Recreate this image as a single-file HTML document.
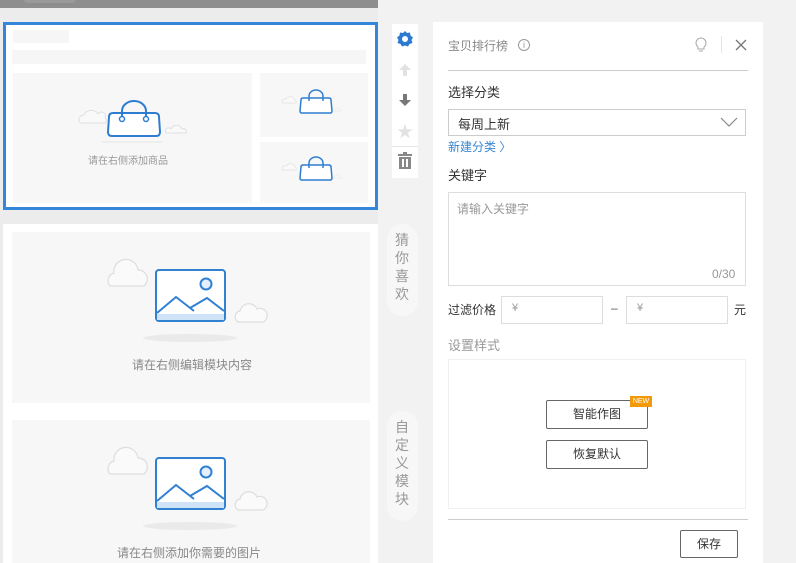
<!DOCTYPE html>
<html><head><meta charset="utf-8"><style>
*{margin:0;padding:0;box-sizing:border-box}
body{width:796px;height:563px;overflow:hidden;background:#f2f2f2;font-family:"Liberation Sans","Noto Sans CJK SC",sans-serif;position:relative;color:#333}
.a{position:absolute}
.t{font-size:12px;color:#888;white-space:nowrap}
</style></head><body>
<div class="a" style="left:0;top:0;width:378px;height:563px;background:#ececec"></div>
<div class="a" style="left:0;top:0;width:378px;height:8px;background:#8e8e8e"></div>
<div class="a" style="left:24px;top:0;width:52px;height:3px;background:#9a9a9a;border-radius:0 0 6px 6px"></div>
<div class="a" style="left:3px;top:22px;width:375px;height:188px;border:3px solid #3486d8;background:#fff"></div>
<div class="a" style="left:13px;top:30px;width:56px;height:13px;background:#f6f6f6"></div>
<div class="a" style="left:12px;top:50px;width:354px;height:14px;background:#f6f6f6"></div>
<div class="a" style="left:13px;top:73px;width:239px;height:130px;background:#f7f7f7"></div>
<div class="a" style="left:260px;top:73px;width:108px;height:64px;background:#f7f7f7"></div>
<div class="a" style="left:260px;top:142px;width:108px;height:61px;background:#f7f7f7"></div>
<svg class="a" style="left:70px;top:95px" width="130" height="50" viewBox="0 0 130 50">
<path d="M9 26 a5 5 0 0 1 5-6 a8 8 0 0 1 14-1 a4 4 0 0 1 7 4 a3 3 0 0 1 0 5 h-24 a3 3 0 0 1-2-2z" fill="#f9f9f9" stroke="#e0e0e0"/>
<path d="M96 38 a3 3 0 0 1 5-4 a6 6 0 0 1 11 0 a3 3 0 0 1 4 4z" fill="#f9f9f9" stroke="#e0e0e0"/>
<path d="M39 22 q0-4 4-4 h42 q4 0 4 4 l1 15 q0 4-4 4 h-44 q-4 0-4-4z" fill="#fff" stroke="#2f7dd0" stroke-width="2"/>
<path d="M52 24 v-8 a12 10 0 0 1 24 0 v8" fill="none" stroke="#2f7dd0" stroke-width="2"/>
<circle cx="52" cy="24" r="2.5" fill="#fff" stroke="#2f7dd0" stroke-width="1.5"/><circle cx="76" cy="24" r="2.5" fill="#fff" stroke="#2f7dd0" stroke-width="1.5"/>
<path d="M32 47 h60" stroke="#eee" stroke-width="2"/>
</svg>
<div class="t a" style="left:88px;top:152px;font-size:10px;color:#999">请在右侧添加商品</div>
<svg class="a" style="left:278px;top:88px" width="70" height="30" viewBox="0 0 70 30">
<path d="M4 14 a3 3 0 0 1 4-3 a5 5 0 0 1 9 1 a2 2 0 0 1 1 3 h-13z" fill="#f9f9f9" stroke="#e6e6e6"/>
<path d="M23 12 q0-2 2-2 h26 q2 0 2 2 l1 11 q0 2-2 2 h-28 q-2 0-2-2z" fill="#fff" stroke="#2f7dd0" stroke-width="1.5"/>
<path d="M31 13 v-5 a7 6 0 0 1 14 0 v5" fill="none" stroke="#2f7dd0" stroke-width="1.5"/>
<path d="M56 23 a3 3 0 0 1 6 0 h2 z" fill="#f9f9f9" stroke="#eee"/></svg>
<svg class="a" style="left:278px;top:155px" width="70" height="30" viewBox="0 0 70 30">
<path d="M4 14 a3 3 0 0 1 4-3 a5 5 0 0 1 9 1 a2 2 0 0 1 1 3 h-13z" fill="#f9f9f9" stroke="#e6e6e6"/>
<path d="M23 12 q0-2 2-2 h26 q2 0 2 2 l1 11 q0 2-2 2 h-28 q-2 0-2-2z" fill="#fff" stroke="#2f7dd0" stroke-width="1.5"/>
<path d="M31 13 v-5 a7 6 0 0 1 14 0 v5" fill="none" stroke="#2f7dd0" stroke-width="1.5"/>
<path d="M56 23 a3 3 0 0 1 6 0 h2 z" fill="#f9f9f9" stroke="#eee"/></svg>
<div class="a" style="left:3px;top:224px;width:375px;height:339px;background:#fff"></div>
<div class="a" style="left:12px;top:232px;width:358px;height:171px;background:#f7f7f7"></div>
<div class="a" style="left:12px;top:420px;width:358px;height:143px;background:#f7f7f7"></div>
<svg class="a" style="left:100px;top:252px" width="180" height="95" viewBox="100 252 180 95">
<path d="M110 286 a8 8 0 0 1 4-13 a12 12 0 0 1 24-3 a9 9 0 0 1 6 16z" fill="#fafafa" stroke="#ddd" stroke-width="1.2"/>
<path d="M238 322 a6 6 0 0 1 2-11 a9 9 0 0 1 17-2 a7 7 0 0 1 6 13z" fill="#fafafa" stroke="#ddd" stroke-width="1.2"/>
<ellipse cx="190" cy="338" rx="47" ry="4" fill="#eaeaea"/>
<rect x="156" y="270" width="69" height="51" rx="3" fill="#fff" stroke="#3280d2" stroke-width="2"/>
<rect x="157" y="314" width="67" height="6" fill="#cfe3f8"/>
<circle cx="206" cy="284" r="5.5" fill="#e3effb" stroke="#3280d2" stroke-width="2"/>
<path d="M157 313 L176 297 L194 311 M190 308 L207 298 L224 311" fill="none" stroke="#3280d2" stroke-width="2"/>
</svg>
<div class="t a" style="left:132px;top:356px">请在右侧编辑模块内容</div>
<svg class="a" style="left:100px;top:440px" width="180" height="95" viewBox="100 252 180 95">
<path d="M110 286 a8 8 0 0 1 4-13 a12 12 0 0 1 24-3 a9 9 0 0 1 6 16z" fill="#fafafa" stroke="#ddd" stroke-width="1.2"/>
<path d="M238 322 a6 6 0 0 1 2-11 a9 9 0 0 1 17-2 a7 7 0 0 1 6 13z" fill="#fafafa" stroke="#ddd" stroke-width="1.2"/>
<ellipse cx="190" cy="338" rx="47" ry="4" fill="#eaeaea"/>
<rect x="156" y="270" width="69" height="51" rx="3" fill="#fff" stroke="#3280d2" stroke-width="2"/>
<rect x="157" y="314" width="67" height="6" fill="#cfe3f8"/>
<circle cx="206" cy="284" r="5.5" fill="#e3effb" stroke="#3280d2" stroke-width="2"/>
<path d="M157 313 L176 297 L194 311 M190 308 L207 298 L224 311" fill="none" stroke="#3280d2" stroke-width="2"/>
</svg>
<div class="t a" style="left:117px;top:544px">请在右侧添加你需要的图片</div>
<div class="a" style="left:392px;top:24px;width:26px;height:154px;background:#fff"></div>
<div class="a" style="left:392px;top:146px;width:26px;height:1px;background:#e6e6e6"></div>
<svg class="a" style="left:396px;top:30px" width="18" height="18" viewBox="0 0 18 18"><path d="M9 1 L11 3 L14 2.5 L14.5 5.5 L17 7.5 L15.5 10 L16.5 13 L13.5 14 L12 16.5 L9 15.5 L6 16.5 L4.5 14 L1.5 13 L2.5 10 L1 7.5 L3.5 5.5 L4 2.5 L7 3z" fill="#2a7ad2"/><circle cx="9" cy="9" r="3" fill="#fff"/></svg>
<svg class="a" style="left:398px;top:63px" width="14" height="14" viewBox="0 0 14 14"><path d="M7 1 L13 7 H9 V13 H5 V7 H1z" fill="#e2e2e2"/></svg>
<svg class="a" style="left:398px;top:93px" width="14" height="14" viewBox="0 0 14 14"><path d="M7 13 L13 7 H9 V1 H5 V7 H1z" fill="#777"/></svg>
<div class="a" style="left:397px;top:118px;font-size:16px;color:#e2e2e2">★</div>
<svg class="a" style="left:398px;top:152px" width="14" height="17" viewBox="0 0 14 17"><rect x="0" y="2" width="14" height="2" fill="#888"/><rect x="5" y="0" width="4" height="2" fill="#888"/><path d="M1 5 H13 V17 H1z" fill="#888"/><rect x="4" y="7" width="2" height="8" fill="#fff"/><rect x="8" y="7" width="2" height="8" fill="#fff"/></svg>
<div class="a" style="left:387px;top:224px;width:31px;height:92px;background:#f7f7f7;border-radius:15px"></div>
<div class="a" style="left:395px;top:231px;width:16px;font-size:14px;line-height:18px;color:#999">猜你喜欢</div>
<div class="a" style="left:387px;top:411px;width:31px;height:110px;background:#f7f7f7;border-radius:15px"></div>
<div class="a" style="left:395px;top:418px;width:16px;font-size:14px;line-height:18px;color:#999">自定义模块</div>
<div class="a" style="left:433px;top:22px;width:330px;height:541px;background:#fff"></div>
<div class="a" style="left:448px;top:37px;font-size:12px;color:#888">宝贝排行榜</div>
<div class="a" style="left:518px;top:39px;width:12px;height:12px;border:1px solid #999;border-radius:50%;font-size:9px;line-height:10px;text-align:center;color:#999">i</div>
<svg class="a" style="left:694px;top:36px" width="14" height="16" viewBox="0 0 14 16"><path d="M4 11 a5 5 0 1 1 6 0 v2 h-6z" fill="none" stroke="#aaa"/><path d="M5 15 h4" stroke="#aaa"/></svg>
<div class="a" style="left:721px;top:36px;width:1px;height:17px;background:#e5e5e5"></div>
<svg class="a" style="left:735px;top:39px" width="12" height="12" viewBox="0 0 12 12"><path d="M1 1 L11 11 M11 1 L1 11" stroke="#777" stroke-width="1.3"/></svg>
<div class="a" style="left:448px;top:70px;width:300px;height:1px;background:#ccc"></div>
<div class="a" style="left:448px;top:82px;font-size:13px;color:#333">选择分类</div>
<div class="a" style="left:448px;top:109px;width:298px;height:27px;border:1px solid #ccc"></div>
<div class="a" style="left:458px;top:114px;font-size:13px;color:#333">每周上新</div>
<svg class="a" style="left:720px;top:116px" width="18" height="12" viewBox="0 0 18 12"><path d="M1 2 L9 10 L17 2" fill="none" stroke="#888" stroke-width="1.2"/></svg>
<div class="a" style="left:448px;top:138px;font-size:12px;color:#3a86d1">新建分类 <span style="font-size:12px">〉</span></div>
<div class="a" style="left:448px;top:165px;font-size:13px;color:#333">关键字</div>
<div class="a" style="left:448px;top:192px;width:298px;height:94px;border:1px solid #ddd"></div>
<div class="a" style="left:457px;top:200px;font-size:12px;color:#999">请输入关键字</div>
<div class="a" style="left:712px;top:267px;font-size:12px;color:#999">0/30</div>
<div class="a" style="left:448px;top:301px;font-size:12px;color:#333">过滤价格</div>
<div class="a" style="left:501px;top:296px;width:102px;height:28px;border:1px solid #ddd"></div>
<div class="a" style="left:512px;top:302px;font-size:11px;color:#999">¥</div>
<div class="a" style="left:611px;top:301px;font-size:12px;color:#555">–</div>
<div class="a" style="left:626px;top:296px;width:102px;height:28px;border:1px solid #ddd"></div>
<div class="a" style="left:637px;top:302px;font-size:11px;color:#999">¥</div>
<div class="a" style="left:734px;top:301px;font-size:12px;color:#333">元</div>
<div class="a" style="left:448px;top:335px;font-size:13px;color:#999">设置样式</div>
<div class="a" style="left:448px;top:359px;width:298px;height:150px;border:1px solid #f0f0f0"></div>
<div class="a" style="left:546px;top:400px;width:102px;height:29px;border:1px solid #666;border-radius:2px;font-size:12px;line-height:27px;text-align:center;color:#333">智能作图</div>
<div class="a" style="left:630px;top:396px;width:22px;height:11px;background:#f39a0b;font-size:7px;line-height:11px;text-align:center;color:#fff">NEW</div>
<div class="a" style="left:546px;top:440px;width:102px;height:29px;border:1px solid #666;border-radius:2px;font-size:12px;line-height:27px;text-align:center;color:#333">恢复默认</div>
<div class="a" style="left:448px;top:519px;width:300px;height:1px;background:#ccc"></div>
<div class="a" style="left:680px;top:530px;width:58px;height:28px;border:1px solid #666;border-radius:2px;font-size:12px;line-height:26px;text-align:center;color:#333">保存</div>
</body></html>
